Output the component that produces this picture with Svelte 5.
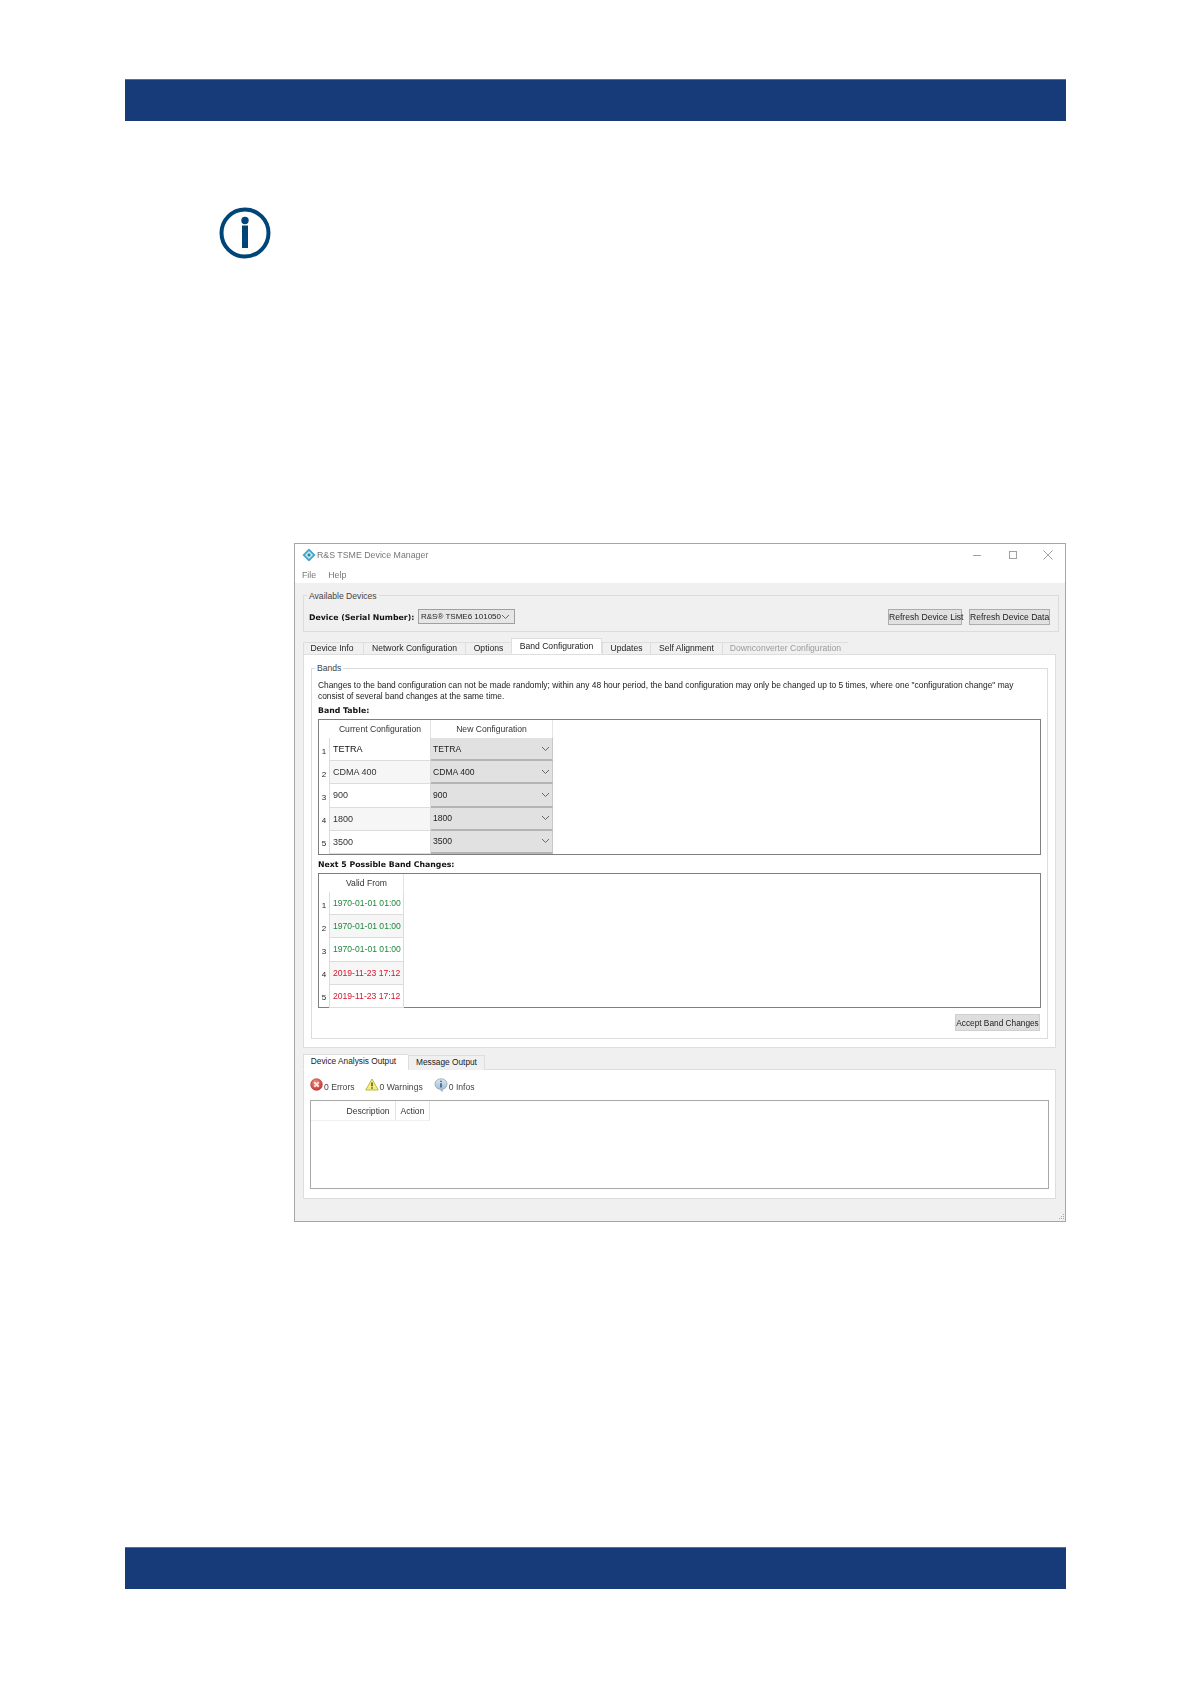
<script>
  const mainTabs = [
    { label: 'Device Info', width: 60 },
    { label: 'Network Configuration', width: 102 },
    { label: 'Options', width: 46 },
    { label: 'Band Configuration', width: 91, active: true },
    { label: 'Updates', width: 48 },
    { label: 'Self Alignment', width: 72 },
    { label: 'Downconverter Configuration', width: 126, disabled: true }
  ]

  const bands = ['TETRA', 'CDMA 400', '900', '1800', '3500']

  const changes = [
    { date: '1970-01-01 01:00', color: 'green' },
    { date: '1970-01-01 01:00', color: 'green' },
    { date: '1970-01-01 01:00', color: 'green' },
    { date: '2019-11-23 17:12', color: 'red' },
    { date: '2019-11-23 17:12', color: 'red' }
  ]
</script>

<div class="page">
  <div class="bar top"></div>

  <svg class="info" width="52" height="52" viewBox="0 0 52 52">
    <circle cx="26" cy="26" r="23.5" fill="none" stroke="#004578" stroke-width="4" />
    <circle cx="26" cy="13.5" r="3.7" fill="#004578" />
    <rect x="23" y="18.500" width="6" height="22.500" fill="#004578" />
  </svg>

  <div class="window">
    <div class="titlebar">
      <svg class="logo" width="14" height="14" viewBox="0 0 14 14">
        <path d="M7 .5 13.500 7 7 13.500.5 7Z" fill="#3fa6c4" />
        <path d="M7 3 11 7 7 11 3 7Z" fill="#cfe8f0" />
        <path d="M7 5 9 7 7 9 5 7Z" fill="#2a8fb0" />
      </svg>
      <span class="title">R&amp;S TSME Device Manager</span>
      <div class="controls">
        <svg width="12" height="12" viewBox="0 0 12 12"><path d="M1 6.500H9" stroke="#a0a0a0" fill="none" /></svg>
        <svg width="12" height="12" viewBox="0 0 12 12"><rect x="2.500" y="2.500" width="7" height="7" stroke="#a0a0a0" fill="none" /></svg>
        <svg width="12" height="12" viewBox="0 0 12 12"><path d="M1.500 1.500 10.500 10.500M10.500 1.500 1.500 10.500" stroke="#a0a0a0" fill="none" /></svg>
      </div>
    </div>
    <div class="menubar"><span>File</span><span>Help</span></div>

    <div class="client">
      <div class="group devices">
        <span class="legend gray-bg">Available Devices</span>
        <b class="device-label">Device (Serial Number):</b>
        <div class="combo">
          <span>R&amp;S® TSME6 101050</span>
          <svg width="9" height="6" viewBox="0 0 9 6"><path d="M1 1 4.500 4.500 8 1" stroke="#666" fill="none" /></svg>
        </div>
        <div class="btn refresh-list">Refresh Device List</div>
        <div class="btn refresh-data">Refresh Device Data</div>
      </div>

      <div class="tabs">
        {#each mainTabs as tab}
          <div class="tab" class:active={tab.active} class:disabled={tab.disabled} style="width: {tab.width}px">{tab.label}</div>
        {/each}
      </div>

      <div class="pane main-pane">
        <div class="group bands-group">
          <span class="legend">Bands</span>
          <p class="intro">Changes to the band configuration can not be made randomly; within any 48 hour period, the band configuration may only be changed up to 5 times, where one "configuration change" may<br />consist of several band changes at the same time.</p>
          <b class="heading first">Band Table:</b>
          <div class="table band-table">
            <div class="head corner"></div>
            <div class="head">Current Configuration</div>
            <div class="head">New Configuration</div>
            {#each bands as band, i}
              <div class="num">{i + 1}</div>
              <div class="cell" class:alt={i % 2 === 1} class:dark={i === 0}>{band}</div>
              <div class="select">
                <span>{band}</span>
                <svg width="9" height="6" viewBox="0 0 9 6"><path d="M1 1 4.500 4.500 8 1" stroke="#666" fill="none" /></svg>
              </div>
            {/each}
          </div>
          <b class="heading">Next 5 Possible Band Changes:</b>
          <div class="table change-table">
            <div class="head corner"></div>
            <div class="head">Valid From</div>
            {#each changes as change, i}
              <div class="num">{i + 1}</div>
              <div class="cell date {change.color}" class:alt={i % 2 === 1}>{change.date}</div>
            {/each}
          </div>
          <div class="accept-row"><div class="btn accept">Accept Band Changes</div></div>
        </div>
      </div>

      <div class="tabs lower">
        <div class="tab active output">Device Analysis Output</div>
        <div class="tab message">Message Output</div>
      </div>

      <div class="pane output-pane">
        <div class="status">
          <span class="stat errors">
            <svg width="13" height="13" viewBox="0 0 14 14">
              <defs>
                <radialGradient id="err" cx="40%" cy="30%" r="75%">
                  <stop offset="0" stop-color="#f08a80" />
                  <stop offset="1" stop-color="#c8322e" />
                </radialGradient>
              </defs>
              <circle cx="7" cy="7" r="6.300" fill="url(#err)" stroke="#a8413f" stroke-width=".7" />
              <path d="M4.600 4.600 9.400 9.400M9.400 4.600 4.600 9.400" stroke="#fde8e6" stroke-width="2" />
            </svg>
            0 Errors
          </span>
          <span class="stat warnings">
            <svg width="14" height="13" viewBox="0 0 14 13">
              <path d="M7 1 13.300 12H.7Z" fill="#f5f07a" stroke="#bdb84a" stroke-linejoin="round" />
              <path d="M7 4.500V8.200M7 9.300V10.700" stroke="#444" stroke-width="1.400" />
            </svg>
            0 Warnings
          </span>
          <span class="stat infos">
            <svg width="14" height="14" viewBox="0 0 14 14">
              <defs>
                <linearGradient id="inf" x1="0" y1="0" x2="0" y2="1">
                  <stop offset="0" stop-color="#dbe6f0" />
                  <stop offset="1" stop-color="#9db6cd" />
                </linearGradient>
              </defs>
              <path d="M7 .8C10.500.8 13 3 13 6s-2.500 5.200-4.500 5.200L8 13.400 6 11.200C3 11 1 9 1 6S3.500.8 7 .8Z" fill="url(#inf)" stroke="#8fa3b5" stroke-width=".8" />
              <path d="M7 2.700V4.100M7 5.200V9.500" stroke="#2d5f8f" stroke-width="1.600" />
            </svg>
            0 Infos
          </span>
        </div>
        <div class="table output-table">
          <div class="head corner"></div>
          <div class="head">Description</div>
          <div class="head">Action</div>
        </div>
      </div>

      <svg class="grip" width="8" height="8" viewBox="0 0 8 8">
        <path d="M6 1h1v1H6zM4 3h1v1H4zM6 3h1v1H6zM2 5h1v1H2zM4 5h1v1H4zM6 5h1v1H6z" fill="#a8a8a8" />
      </svg>
    </div>
  </div>

  <div class="bar bottom"></div>
</div>

<style>
  :global(body) {
    margin: 0;
    background: #fff;
  }

  .page {
    width: 1191px;
    height: 1684px;
    overflow: hidden;
    display: flex;
    flex-direction: column;
    font-family: "Liberation Sans", Arial, sans-serif;
    font-size: 8.6px;
    color: #222;
  }

  b {
    font-family: "DejaVu Sans", sans-serif;
    font-size: 7.8px;
    color: #111;
    white-space: nowrap;
  }

  .bar {
    flex: none;
    box-sizing: border-box;
    height: 42px;
    margin: 0 125px;
    background: #173a78;
    border-top: 1px solid #5a7099;
  }
  .bar.top { margin-top: 79px; }
  .bar.bottom { margin-top: 325px; }

  .info {
    flex: none;
    margin: 86px 0 0 219px;
  }

  .window {
    flex: none;
    width: 770px;
    height: 677px;
    margin: 284px 0 0 294px;
    border: 1px solid #a6a6a6;
    display: flex;
    flex-direction: column;
    filter: blur(0.4px);
  }

  .titlebar {
    height: 22px;
    display: flex;
    align-items: center;
    padding: 0 11px 0 7px;
    color: #777;
    font-size: 8.800px;
  }
  .logo { margin-right: 1px; }
  .controls {
    margin-left: auto;
    display: flex;
    gap: 23px;
  }

  .menubar {
    height: 17px;
    display: flex;
    align-items: center;
    gap: 12px;
    padding: 0 7px;
    color: #777;
    font-size: 8.800px;
  }

  .client {
    flex: 1;
    position: relative;
    background: #f0f0f0;
    padding: 12px 6px 0 8px;
  }

  .group {
    position: relative;
    border: 1px solid #dcdcdc;
    box-sizing: border-box;
  }
  .legend {
    position: absolute;
    top: -6px;
    left: 3px;
    padding: 0 2px;
    line-height: 11px;
    background: #fff;
    color: #444;
  }
  .legend.gray-bg { top: -5px; background: #f0f0f0; }

  .devices {
    height: 37px;
    display: flex;
    align-items: center;
    padding: 6px 8px 0 5px;
  }
  .device-label {
    width: 109px;
    margin-top: 1px;
  }
  .combo {
    flex: none;
    width: 97px;
    height: 15px;
    box-sizing: border-box;
    border: 1px solid #a0a0a0;
    background: #e6e6e6;
    display: flex;
    align-items: center;
    justify-content: space-between;
    padding: 0 5px 0 2px;
    font-size: 8px;
    white-space: nowrap;
  }
  .combo svg { flex: none; }

  .btn {
    box-sizing: border-box;
    height: 16px;
    line-height: 14px;
    border: 1px solid #adadad;
    background: #e1e1e1;
    text-align: center;
    white-space: nowrap;
  }
  .refresh-list { width: 74px; margin-left: auto; }
  .refresh-data { width: 81px; margin-left: 7px; }

  .tabs {
    display: flex;
    height: 16px;
    margin-top: 6px;
    position: relative;
    z-index: 1;
    align-items: flex-end;
  }
  .tab {
    box-sizing: border-box;
    flex: none;
    height: 12px;
    line-height: 10px;
    text-align: center;
    background: #f0f0f0;
    border: 1px solid #dedede;
    border-width: 1px 0 0 1px;
    white-space: nowrap;
  }
  .tab:first-child { padding-right: 3px; }
  .tab.active {
    height: 16px;
    background: #fff;
    border-bottom: 1px solid #fff;
    border-right: 1px solid #dedede;
    line-height: 14px;
  }
  .tab.disabled { color: #9b9b9b; }

  .pane {
    box-sizing: border-box;
    background: #fff;
    border: 1px solid #dedede;
  }
  .main-pane {
    height: 394px;
    margin-right: 3px;
    padding: 13px 7px 0;
  }

  .bands-group {
    height: 371px;
    padding: 11px 6px 0;
  }
  .intro {
    margin: 0;
    font-size: 8.400px;
    line-height: 10.500px;
    white-space: nowrap;
  }
  .heading {
    display: block;
    margin-top: 5px;
    line-height: 10px;
  }
  .heading.first { margin-top: 5px; }

  .table {
    box-sizing: border-box;
    margin-top: 3px;
    border: 1px solid #7f7f7f;
    background: #fff;
    display: grid;
    grid-auto-rows: 23.200px;
  }
  .band-table {
    height: 136px;
    grid-template-columns: 11px 101px 122px;
    grid-template-rows: 18px;
  }
  .change-table {
    height: 135px;
    grid-template-columns: 11px 74px;
    grid-template-rows: 18px;
  }
  .head {
    display: flex;
    align-items: center;
    justify-content: center;
    border-right: 1px solid #e4e4e4;
    color: #333;
  }
  .corner { border-right: 0; }
  .num {
    display: flex;
    align-items: center;
    justify-content: center;
    padding-top: 3px;
    font-size: 8px;
    border-right: 1px solid #dcdcdc;
  }
  .cell {
    display: flex;
    align-items: center;
    padding-left: 3px;
    border-right: 1px solid #dcdcdc;
    border-bottom: 1px solid #dcdcdc;
    color: #333;
    font-size: 9px;
  }
  .cell.alt { background: #f6f6f6; }
  .cell.dark { color: #111; }
  .date { white-space: nowrap; font-size: 8.600px; }
  .date.green { color: #1f8a3c; }
  .date.red { color: #d8142c; }

  .select {
    display: flex;
    align-items: center;
    justify-content: space-between;
    padding: 0 2px 0 2px;
    background: #e1e1e1;
    border-bottom: 2px solid #b4b4b4;
    border-right: 1px solid #c8c8c8;
  }

  .accept-row {
    display: flex;
    justify-content: flex-end;
    margin: 6px 1px 0 0;
  }
  .accept {
    width: 85px;
    height: 17px;
    line-height: 16px;
    border-color: #cfcfcf;
    background: #dedede;
    font-size: 8.300px;
  }

  .tabs.lower {
    height: 15px;
    margin: 7px 0 -1px 0;
    font-size: 8.300px;
  }
  .output { width: 105px; height: 15px; }
  .message { width: 77px; height: 15px; line-height: 13px; border-right: 1px solid #dedede; }
  .tabs.lower .tab.output { border-right: 0; line-height: 13px; padding-right: 5px; }

  .output-pane {
    height: 130px;
    margin-right: 3px;
    padding: 0 6px;
  }
  .status {
    height: 30px;
    display: flex;
    align-items: center;
    padding-top: 4px;
    box-sizing: border-box;
    color: #444;
  }
  .stat {
    display: flex;
    align-items: center;
    gap: 1px;
  }
  .stat svg { margin-top: -5px; }
  .warnings { margin-left: 10px; }
  .infos { margin-left: 11px; }
  .output-table {
    height: 89px;
    margin-top: 0;
    border-color: #a8a8a8;
    grid-template-columns: 30px 55px 34px;
    grid-template-rows: 20px;
  }
  .output-table .head { border-bottom: 1px solid #f0f0f0; }

  .grip {
    position: absolute;
    right: 0;
    bottom: 0;
  }
</style>
